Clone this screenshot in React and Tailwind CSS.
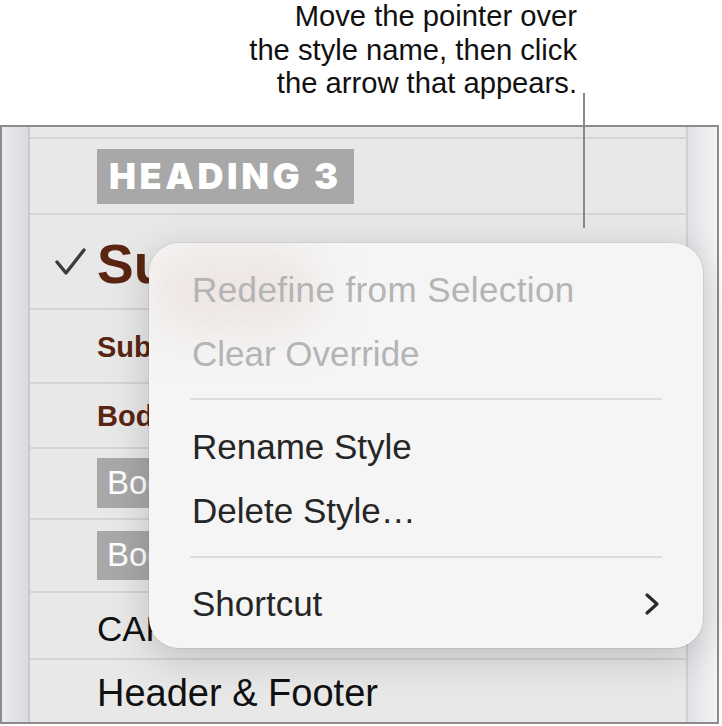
import React from "react";

const Row = ({ h, children, last }) => (
  <div
    className={`relative flex items-center pl-[67px] ${last ? "" : "border-b-2 border-[#d4d4d4]"} shrink-0 overflow-hidden whitespace-nowrap`}
    style={{ height: h }}
  >
    {children}
  </div>
);

const Clip = ({ children, className = "" }) => (
  <div className={`w-[68px] overflow-hidden shrink-0 ${className}`}>{children}</div>
);

export default function App() {
  return (
    <div
      className="relative w-[722px] h-[726px] bg-white overflow-hidden"
      style={{ fontFamily: '"Liberation Sans", Arial, sans-serif' }}
    >
      {/* annotation */}
      <div className="h-[125px] flex justify-end pr-[145px]">
        <p className="text-right text-[29.2px] leading-[33.5px] text-[#111]">
          Move the pointer over
          <br />
          the style name, then click
          <br />
          the arrow that appears.
        </p>
      </div>

      {/* frame */}
      <div className="w-[719px] h-[599px] border-2 border-[#8c8c8c] flex">
        {/* left strip */}
        <div className="w-[26px] h-full bg-gradient-to-r from-[#e9ebef] to-[#d9dbdf] shrink-0" />
        <div className="w-[2px] h-full bg-[#cbcbcb] shrink-0" />
        {/* list */}
        <div className="w-[656px] shrink-0 flex flex-col bg-[#e8e8e8]">
          <Row h={12} />
          <Row h={76}>
            <div className="h-[55px] w-[257px] bg-[#a8a8a8] flex items-center pl-[12px]">
              <span
                className="text-white text-[36px] font-black tracking-[0.1em]"
                style={{ fontFamily: "Inter, sans-serif" }}
              >
                HEADING 3
              </span>
            </div>
          </Row>
          <Row h={95}>
            <svg
              className="absolute left-[25px] top-[32px]"
              width="32"
              height="30"
              viewBox="0 0 32 30"
            >
              <polyline
                points="2,15 11,26 29,3"
                fill="none"
                stroke="#3c3c3c"
                strokeWidth="3.4"
                strokeLinecap="round"
                strokeLinejoin="round"
              />
            </svg>
            <Clip className="mt-[6px]">
              <span className="text-[55px] font-bold text-[#5a2512] leading-none block">
                Subtitle
              </span>
            </Clip>
          </Row>
          <Row h={74}>
            <Clip className="mt-[4px]">
              <span className="text-[29px] font-bold text-[#5a2512]">Subtitle 2</span>
            </Clip>
          </Row>
          <Row h={65}>
            <Clip className="mt-[2px]">
              <span className="text-[29px] font-bold text-[#5a2512]">Body Bold</span>
            </Clip>
          </Row>
          <Row h={71}>
            <div className="h-[50px] w-[80px] overflow-hidden bg-[#a8a8a8] flex items-center px-[10px] mt-[-1px]">
              <span className="text-white text-[33px]">Body Small</span>
            </div>
          </Row>
          <Row h={73}>
            <div className="h-[49px] w-[80px] overflow-hidden bg-[#a8a8a8] flex items-center px-[10px] mt-[-1px]">
              <span className="text-white text-[33px]">Body Medium</span>
            </div>
          </Row>
          <Row h={67}>
            <Clip className="mt-[8px]">
              <span className="text-[35px] text-[#111]">CAPTION</span>
            </Clip>
          </Row>
          <Row h={62} last>
            <span className="text-[38px] text-[#111] mt-[4px]">Header &amp; Footer</span>
          </Row>
        </div>
        {/* right strip */}
        <div className="w-[2px] h-full bg-[#d0d0d0] shrink-0" />
        <div className="flex-1 h-full bg-gradient-to-r from-[#e1e2e5] to-[#f3f4f6]" />
      </div>

      {/* leader line */}
      <div className="absolute left-[583px] top-[93px] w-[2px] h-[135px] bg-[#8a8a8a]" />

      {/* context menu */}
      <div className="absolute left-[149px] top-[243px] w-[554px] h-[405px] rounded-[30px] bg-[#f5f5f5] overflow-hidden shadow-[0_10px_40px_rgba(0,0,0,0.18),0_0_0_1px_rgba(0,0,0,0.06)] pt-[15px] pb-[12px] text-[35px]">
        <div className="absolute left-[0px] top-[8px] w-[170px] h-[80px] rounded-full bg-[#eadfdb] blur-xl opacity-70" />
        <div className="relative h-[64px] flex items-center pl-[43px] text-[#b4b4b4] tracking-[0.4px]">
          Redefine from Selection
        </div>
        <div className="relative h-[64px] flex items-center pl-[43px] text-[#b4b4b4]">
          Clear Override
        </div>
        <div className="mt-[12px] mb-[15px] h-[2px] mx-[41px] bg-[#dcdcdc]" />
        <div className="h-[64px] flex items-center pl-[43px] text-[#262626]">
          Rename Style
        </div>
        <div className="h-[64px] flex items-center pl-[43px] text-[#262626]">
          Delete Style…
        </div>
        <div className="mt-[13px] mb-[14px] h-[2px] mx-[41px] bg-[#dcdcdc]" />
        <div className="h-[64px] flex items-center justify-between pl-[43px] pr-[42px] text-[#262626]">
          <span>Shortcut</span>
          <svg width="18" height="24" viewBox="0 0 18 24">
            <polyline
              points="4,3 14,12 4,21"
              fill="none"
              stroke="#2a2a2a"
              strokeWidth="3.2"
              strokeLinecap="round"
              strokeLinejoin="round"
            />
          </svg>
        </div>
      </div>
    </div>
  );
}
